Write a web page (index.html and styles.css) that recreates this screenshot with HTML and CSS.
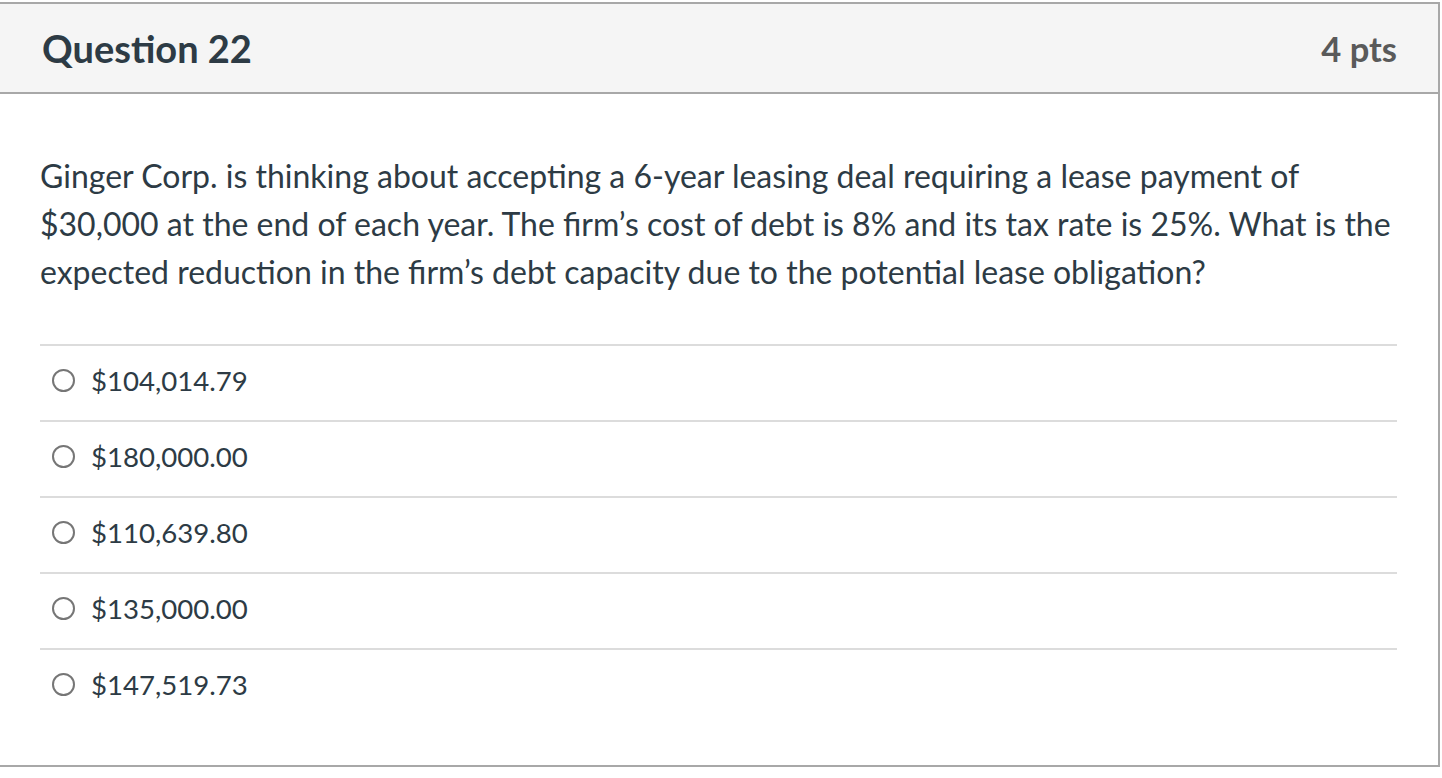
FILE: index.html
```html
<!DOCTYPE html>
<html>
<head>
<meta charset="utf-8">
<link rel="stylesheet" href="styles.css">
</head>
<body>
<div class="question">
  <div class="header">
    <h2 class="title">Question 22</h2>
    <div class="points">4 pts</div>
  </div>
  <div class="content">
    <p class="text">Ginger Corp. is thinking about accepting a 6-year leasing deal requiring a lease payment of $30,000 at the end of each year. The firm’s cost of debt is 8% and its tax rate is 25%. What is the expected reduction in the firm’s debt capacity due to the potential lease obligation?</p>
    <div class="answers">
      <label class="answer"><span class="radio"></span><span class="label">$104,014.79</span></label>
      <label class="answer"><span class="radio"></span><span class="label">$180,000.00</span></label>
      <label class="answer"><span class="radio"></span><span class="label">$110,639.80</span></label>
      <label class="answer"><span class="radio"></span><span class="label">$135,000.00</span></label>
      <label class="answer"><span class="radio"></span><span class="label">$147,519.73</span></label>
    </div>
  </div>
</div>
</body>
</html>
```
FILE: styles.css
```css
html, body {
  margin: 0;
  padding: 0;
  background: #fff;
}
body {
  font-family: Lato, "Open Sans", sans-serif;
  color: #2d3b45;
}
.question {
  margin-top: 2px;
  width: 1438px;
  border: 2px solid #a8a8a8;
  border-left: none;
}
.header {
  display: flex;
  align-items: center;
  justify-content: space-between;
  height: 90px;
  background: #f5f5f5;
  border-bottom: 2px solid #a8a8a8;
  padding: 0 41px 0 42px;
  box-sizing: border-box;
}
.title {
  margin: 0;
  font-size: 38px;
  font-weight: 700;
  color: #2d3b45;
}
.points {
  font-size: 34.5px;
  font-weight: 700;
  color: #5a5a5a;
}
.content {
  padding: 58px 41px 41px 40px;
}
.text {
  margin: 0 0 48px;
  font-size: 32px;
  line-height: 48px;
  color: #2d3b45;
}
.answers {
  display: flex;
  flex-direction: column;
}
.answer {
  display: flex;
  align-items: center;
  height: 76px;
  border-top: 2px solid #dcdcdc;
  padding: 0 0 6px 12px;
  box-sizing: border-box;
}
.radio {
  width: 19px;
  height: 19px;
  border: 2px solid #767676;
  border-radius: 50%;
  margin-right: 16px;
  box-sizing: content-box;
  flex: none;
}
.label {
  font-size: 27.6px;
  color: #2d3b45;
}
```
